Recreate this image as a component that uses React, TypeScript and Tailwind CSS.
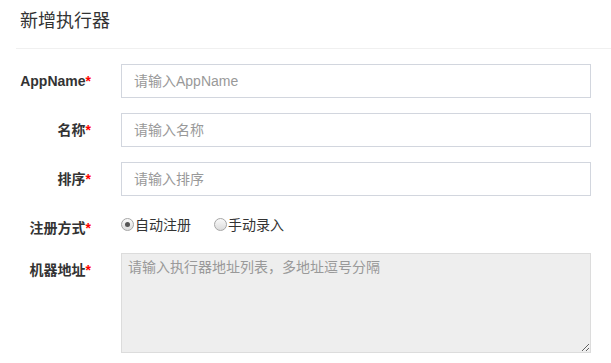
import React from "react";

const font = "font-['Liberation_Sans','Noto_Sans_CJK_SC',sans-serif]";

function Label({ text }: { text: string }) {
  return (
    <label className="w-[106px] shrink-0 pr-[15px] pt-[7px] text-right text-sm leading-5 font-bold text-[#333]">
      {text}
      <span className="text-[#f00]">*</span>
    </label>
  );
}

function Radio({ checked, text }: { checked?: boolean; text: string }) {
  return (
    <span className="flex items-center gap-[1px] text-sm leading-[22px] text-[#333]">
      <span className="flex size-[13px] items-center justify-center rounded-full border border-[#a6a6a6] bg-gradient-to-b from-[#fafafa] to-[#dcdcdc]">
        {checked && <span className="size-[5px] rounded-full bg-[#555]" />}
      </span>
      <span>{text}</span>
    </span>
  );
}

export default function App() {
  return (
    <div className={`h-[363px] w-[611px] overflow-hidden bg-white ${font}`}>
      <div className="ml-4 h-[49px] border-b border-[#f0f0f0] pt-[8px] pl-[4px]">
        <h4 className="text-lg leading-[26px] text-[#333]">新增执行器</h4>
      </div>

      <form className="flex flex-col gap-[15px] pt-[15px]">
        {[
          ["AppName", "请输入AppName"],
          ["名称", "请输入名称"],
          ["排序", "请输入排序"],
        ].map(([label, ph]) => (
          <div key={label} className="flex">
            <Label text={label} />
            <div className="w-[485px] pl-[15px]">
              <input
                placeholder={ph}
                className="h-[34px] w-full border border-[#d2d6de] px-3 text-sm text-[#555] outline-none placeholder:text-[#999]"
              />
            </div>
          </div>
        ))}

        <div className="flex h-[27px]">
          <Label text="注册方式" />
          <div className="flex gap-[23px] pl-[15px] pt-[-1px]">
            <Radio checked text="自动注册" />
            <Radio text="手动录入" />
          </div>
        </div>

        <div className="flex">
          <Label text="机器地址" />
          <div className="w-[485px] pl-[15px]">
            <textarea
              disabled
              placeholder="请输入执行器地址列表，多地址逗号分隔"
              className="block h-[100px] w-full border border-[#dcdcdc] bg-[#eee] px-[6px] pt-[3px] text-sm leading-5 placeholder:text-[#999]"
            />
          </div>
        </div>
      </form>
    </div>
  );
}
